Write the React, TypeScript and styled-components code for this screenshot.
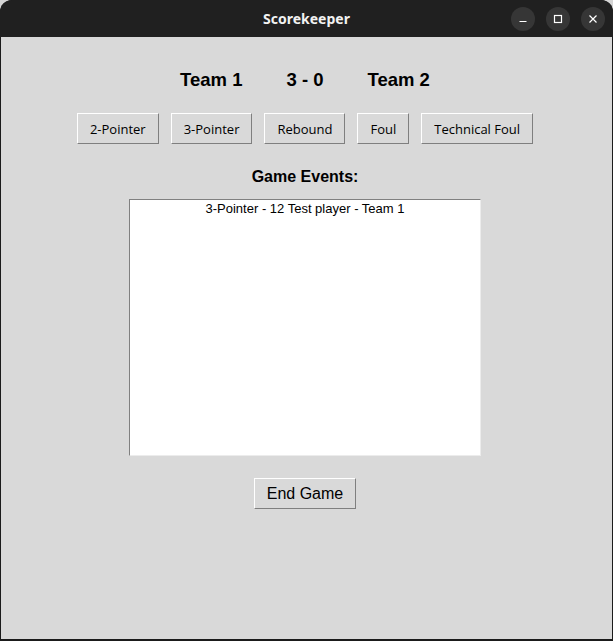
import React from 'react';
import styled, { createGlobalStyle } from 'styled-components';

const GlobalStyle = createGlobalStyle`
  html, body {
    margin: 0;
    padding: 0;
    background: #d4d4d4;
  }
`;

const Window = styled.div`
  width: 613px;
  height: 641px;
  box-sizing: border-box;
  display: flex;
  flex-direction: column;
  background: #1b1b1b;
  border-radius: 12px 12px 0 0;
  overflow: hidden;
  padding: 0 1px 2px 1px;
`;

const TitleBar = styled.div`
  height: 37px;
  flex-shrink: 0;
  background: #202020;
  display: grid;
  grid-template-columns: 1fr auto 1fr;
  align-items: center;
  margin: 0 -1px;
`;

const Title = styled.div`
  grid-column: 2;
  color: #f2f2f2;
  font-family: 'Noto Sans', 'Open Sans', sans-serif;
  font-weight: 700;
  font-size: 14px;
`;

const Controls = styled.div`
  grid-column: 3;
  justify-self: end;
  display: flex;
  gap: 11px;
  padding-right: 8px;
`;

const CtrlButton = styled.div`
  width: 24px;
  height: 24px;
  border-radius: 50%;
  background: #363636;
  display: flex;
  align-items: center;
  justify-content: center;
`;

const Content = styled.div`
  flex: 1;
  background: #d9d9d9;
  display: flex;
  flex-direction: column;
  align-items: center;
  padding: 32px 3px 0 0;
`;

const ScoreRow = styled.div`
  display: flex;
  gap: 44px;
  height: 22px;
  align-items: center;
  font-family: 'Liberation Sans', Arial, sans-serif;
  font-weight: 700;
  font-size: 18.5px;
  color: #000;
`;

const ActionRow = styled.div`
  display: flex;
  gap: 12px;
  margin-top: 22px;
`;

const RaisedButton = styled.button<{ $big?: boolean }>`
  height: 31px;
  box-sizing: border-box;
  background: #d9d9d9;
  border: 1px solid;
  border-color: #ffffff #7f7f7f #7f7f7f #ffffff;
  border-radius: 0;
  padding: 0 12px;
  font-family: ${p => (p.$big ? "'Liberation Sans', Arial, sans-serif" : "'Open Sans', 'Noto Sans', sans-serif")};
  font-size: ${p => (p.$big ? 16 : 13)}px;
  color: #000;
  cursor: pointer;
`;

const SectionLabel = styled.div`
  margin-top: 23px;
  height: 20px;
  line-height: 20px;
  font-family: 'Liberation Sans', Arial, sans-serif;
  font-weight: 700;
  font-size: 16px;
  color: #000;
`;

const EventList = styled.ul`
  list-style: none;
  margin: 12px 0 0 0;
  padding: 1px 0 0 0;
  width: 352px;
  height: 257px;
  box-sizing: border-box;
  background: #fff;
  border: 1px solid;
  border-color: #808080 #ececec #ececec #808080;
`;

const EventItem = styled.li`
  text-align: center;
  font-family: 'Liberation Sans', Arial, sans-serif;
  font-size: 13px;
  line-height: 16px;
  color: #000;
`;

const Footer = styled.div`
  margin-top: 22px;
`;

const actions = ['2-Pointer', '3-Pointer', 'Rebound', 'Foul', 'Technical Foul'];
const events = ['3-Pointer - 12 Test player - Team 1'];

export default function App() {
  return (
    <>
      <GlobalStyle />
      <Window>
        <TitleBar>
          <Title>Scorekeeper</Title>
          <Controls>
            <CtrlButton>
              <svg width="10" height="10" viewBox="0 0 10 10">
                <path d="M1.5 7.5h7" stroke="#fff" strokeWidth="1.2" />
              </svg>
            </CtrlButton>
            <CtrlButton>
              <svg width="10" height="10" viewBox="0 0 10 10">
                <rect x="1.5" y="1.5" width="7" height="7" fill="none" stroke="#fff" strokeWidth="1.2" />
              </svg>
            </CtrlButton>
            <CtrlButton>
              <svg width="10" height="10" viewBox="0 0 10 10">
                <path d="M1.5 1.5l7 7M8.5 1.5l-7 7" stroke="#fff" strokeWidth="1.2" />
              </svg>
            </CtrlButton>
          </Controls>
        </TitleBar>
        <Content>
          <ScoreRow>
            <span>Team 1</span>
            <span>3 - 0</span>
            <span>Team 2</span>
          </ScoreRow>
          <ActionRow>
            {actions.map(a => (
              <RaisedButton key={a}>{a}</RaisedButton>
            ))}
          </ActionRow>
          <SectionLabel>Game Events:</SectionLabel>
          <EventList>
            {events.map((e, i) => (
              <EventItem key={i}>{e}</EventItem>
            ))}
          </EventList>
          <Footer>
            <RaisedButton $big>End Game</RaisedButton>
          </Footer>
        </Content>
      </Window>
    </>
  );
}
